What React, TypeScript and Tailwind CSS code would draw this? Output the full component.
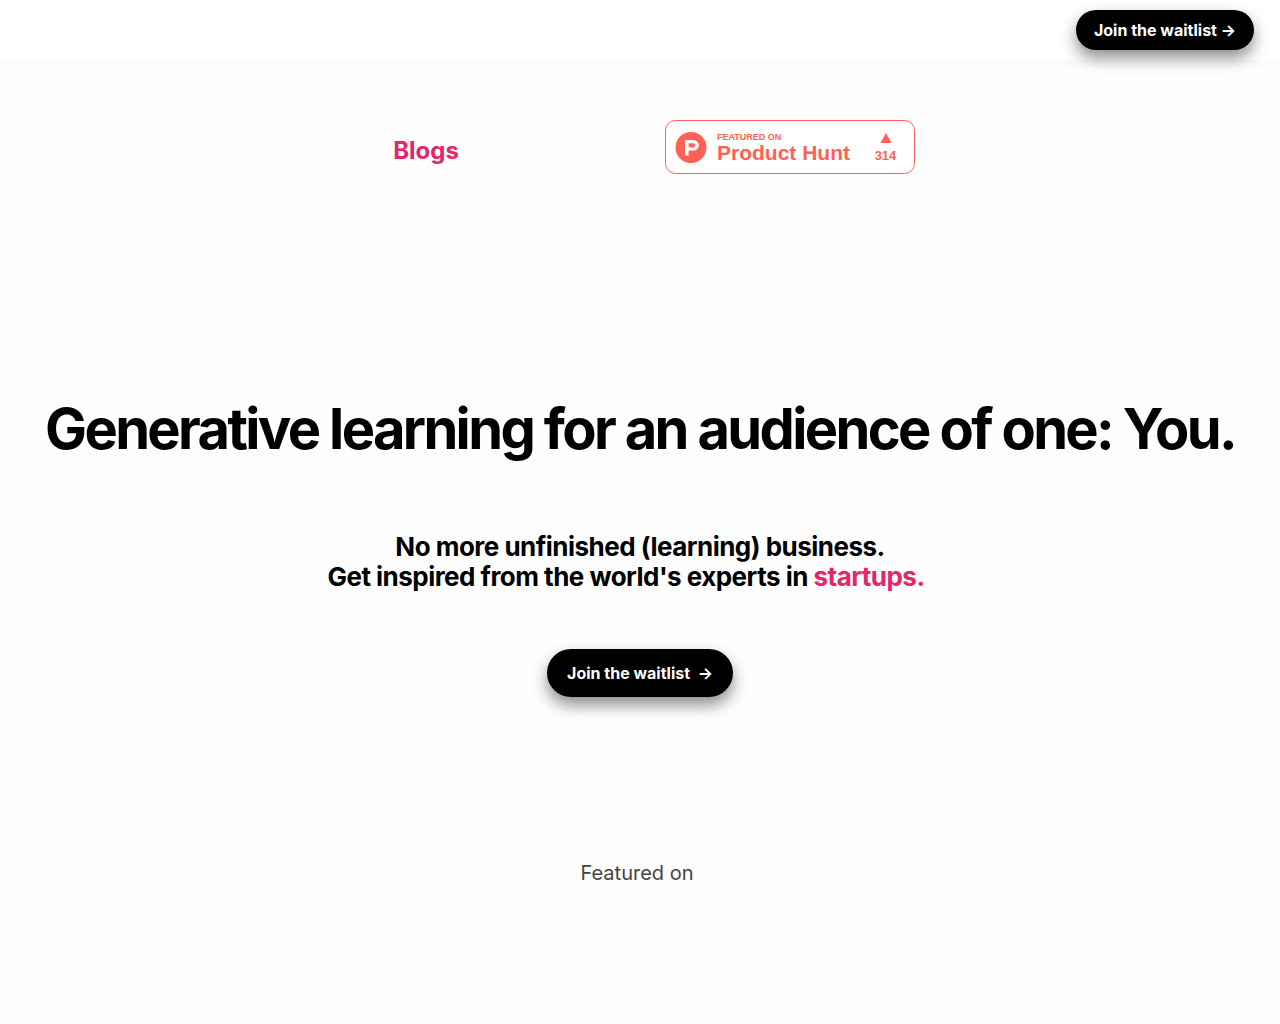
function ProductHuntBadge() {
  return (
    <svg width="250" height="54" viewBox="0 0 250 54" fill="none" role="img" aria-label="Featured on Product Hunt, 314 upvotes">
      <rect x="0.5" y="0.5" width="249" height="53" rx="10" fill="#fff" stroke="#FF6154" />
      <text x="52" y="20" fill="#FF6154" fontFamily="'Liberation Sans', sans-serif" fontSize="9" fontWeight="700">FEATURED ON</text>
      <text x="52" y="40" fill="#FF6154" fontFamily="'Liberation Sans', sans-serif" fontSize="21" fontWeight="700">Product Hunt</text>
      <path d="M221 13l5.500 10h-11z" fill="#FF6154" />
      <text x="220.500" y="40" textAnchor="middle" fill="#FF6154" fontFamily="'Liberation Sans', sans-serif" fontSize="13" fontWeight="700">314</text>
      <circle cx="26" cy="27.500" r="15.500" fill="#FF6154" />
      <path fillRule="evenodd" d="M20 20h8.500a5.300 5.300 0 0 1 0 10.600h-4.900v5H20zM23.600 23.200v4.200h4.600a2.100 2.100 0 0 0 0-4.200z" fill="#fff" />
    </svg>
  );
}

export default function App() {
  return (
    <div className="min-h-screen bg-[#fefefe] font-['Inter',sans-serif] text-black">
      <header className="flex h-[60px] items-center justify-end bg-white pr-[26px] shadow-[0_2px_10px_rgba(0,0,0,0.03)]">
        <button className="h-10 rounded-full bg-black px-[18px] text-base font-bold whitespace-nowrap text-white shadow-[0_8px_16px_rgba(0,0,0,0.45)]">
          Join the waitlist →
        </button>
      </header>
      <main className="flex flex-col items-center">
        <nav className="flex w-full items-start justify-center gap-[206px] pt-[60px] pl-7">
          <a href="#blogs" className="pt-[13px] text-2xl leading-9 font-bold text-[#e4266c]">Blogs</a>
          <a href="#product-hunt"><ProductHuntBadge /></a>
        </nav>
        <h1 className="mt-[220px] text-center text-[56px] leading-[70px] font-bold tracking-[-0.047em]">
          Generative learning for an audience of one: You.
        </h1>
        <h2 className="mt-[68px] flex flex-col text-[26px] leading-[30px] font-bold tracking-[-0.02em]">
          <span className="text-center">No more unfinished (learning) business.</span>
          <span className="pr-7">Get inspired from the world's experts in <span className="text-[#e4266c]">startups.</span></span>
        </h2>
        <button className="mt-[57px] h-12 rounded-full bg-black px-5 text-base font-bold whitespace-pre text-white shadow-[0_8px_16px_rgba(0,0,0,0.45)]">
          {"Join the waitlist  →"}
        </button>
        <p className="mt-[161px] pr-1.5 text-xl leading-[30px] text-[#444]">Featured on</p>
      </main>
    </div>
  );
}
